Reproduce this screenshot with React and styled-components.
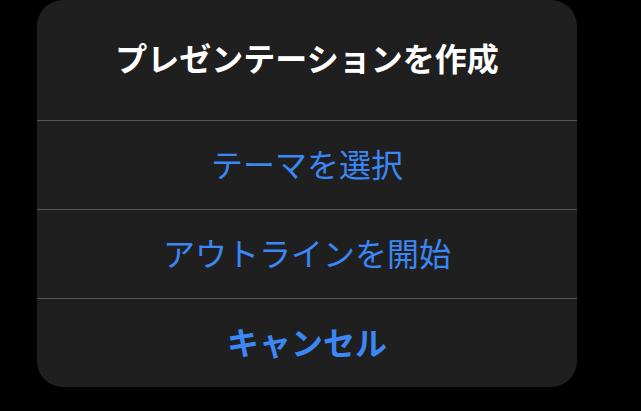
import styled, { createGlobalStyle } from 'styled-components';

const GlobalStyle = createGlobalStyle`
  html, body {
    margin: 0;
    padding: 0;
    background: #000;
  }
  body {
    font-family: "Noto Sans CJK JP", "Noto Sans", sans-serif;
  }
`;

const Page = styled.div`
  width: 641px;
  height: 411px;
  background: #000;
  padding-left: 37px;
  box-sizing: border-box;
`;

const Sheet = styled.div`
  width: 540px;
  height: 387px;
  background: #1f1f1f;
  border-radius: 26px;
  display: flex;
  flex-direction: column;
  overflow: hidden;
`;

const Title = styled.div`
  height: 120px;
  display: flex;
  align-items: center;
  justify-content: center;
  color: #fff;
  font-size: 32px;
  font-weight: 700;
  padding-bottom: 6px;
  box-sizing: border-box;
`;

const Action = styled.div`
  height: 89px;
  display: flex;
  align-items: center;
  justify-content: center;
  border-top: 1px solid #585858;
  padding-bottom: 4px;
  box-sizing: border-box;
  color: #3a87f5;
  font-size: 32px;
  font-weight: ${({ $bold }) => ($bold ? 700 : 400)};
  cursor: pointer;
`;

const actions = [
  { label: 'テーマを選択' },
  { label: 'アウトラインを開始' },
  { label: 'キャンセル', bold: true },
];

const App = () => {
  return (
    <Page>
      <GlobalStyle />
      <Sheet>
        <Title>プレゼンテーションを作成</Title>
        {actions.map((a) => (
          <Action key={a.label} $bold={a.bold}>
            {a.label}
          </Action>
        ))}
      </Sheet>
    </Page>
  );
};

export default App;
